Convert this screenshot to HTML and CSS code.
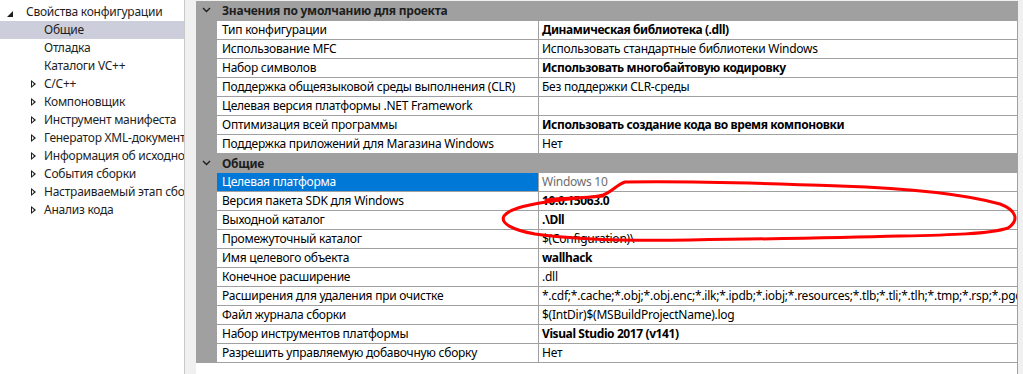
FILE: index.html
```html
<!DOCTYPE html>
<html lang="ru">
<head>
  <meta charset="UTF-8">
  <title>Страницы свойств</title>
  <link rel="stylesheet" href="styles.css">
</head>
<body>
  <div class="window">
    <nav class="tree">
      <div class="tree-item root">
        <svg class="exp-open" width="6" height="6" viewBox="0 0 6 6"><polygon points="6,0 6,6 0,6" fill="#1e1e1e"/></svg>
        Свойства конфигурации
      </div>
      <div class="tree-item child selected">Общие</div>
      <div class="tree-item child">Отладка</div>
      <div class="tree-item child">Каталоги VC++</div>
      <div class="tree-item child has-kids">C/C++</div>
      <div class="tree-item child has-kids">Компоновщик</div>
      <div class="tree-item child has-kids">Инструмент манифеста</div>
      <div class="tree-item child has-kids">Генератор XML-документов</div>
      <div class="tree-item child has-kids">Информация об исходном коде</div>
      <div class="tree-item child has-kids">События сборки</div>
      <div class="tree-item child has-kids">Настраиваемый этап сборки</div>
      <div class="tree-item child has-kids">Анализ кода</div>
    </nav>

    <section class="grid">
      <div class="group">
        <span class="chev"><svg width="9" height="6" viewBox="0 0 9 6"><polyline points="1,1 4.5,4.5 8,1" fill="none" stroke="#1e1e1e" stroke-width="1.4"/></svg></span>
        <span class="group-title">Значения по умолчанию для проекта</span>
      </div>
      <div class="row"><span class="name">Тип конфигурации</span><span class="value bold">Динамическая библиотека (.dll)</span></div>
      <div class="row"><span class="name">Использование MFC</span><span class="value">Использовать стандартные библиотеки Windows</span></div>
      <div class="row"><span class="name">Набор символов</span><span class="value bold">Использовать многобайтовую кодировку</span></div>
      <div class="row"><span class="name">Поддержка общеязыковой среды выполнения (CLR)</span><span class="value">Без поддержки CLR-среды</span></div>
      <div class="row"><span class="name">Целевая версия платформы .NET Framework</span><span class="value"></span></div>
      <div class="row"><span class="name">Оптимизация всей программы</span><span class="value bold">Использовать создание кода во время компоновки</span></div>
      <div class="row"><span class="name">Поддержка приложений для Магазина Windows</span><span class="value">Нет</span></div>

      <div class="group">
        <span class="chev"><svg width="9" height="6" viewBox="0 0 9 6"><polyline points="1,1 4.5,4.5 8,1" fill="none" stroke="#1e1e1e" stroke-width="1.4"/></svg></span>
        <span class="group-title">Общие</span>
      </div>
      <div class="row active"><span class="name">Целевая платформа</span><span class="value muted">Windows 10</span></div>
      <div class="row"><span class="name">Версия пакета SDK для Windows</span><span class="value bold">10.0.15063.0</span></div>
      <div class="row"><span class="name">Выходной каталог</span><span class="value bold">.\Dll</span></div>
      <div class="row"><span class="name">Промежуточный каталог</span><span class="value">$(Configuration)\</span></div>
      <div class="row"><span class="name">Имя целевого объекта</span><span class="value bold">wallhack</span></div>
      <div class="row"><span class="name">Конечное расширение</span><span class="value">.dll</span></div>
      <div class="row"><span class="name">Расширения для удаления при очистке</span><span class="value">*.cdf;*.cache;*.obj;*.obj.enc;*.ilk;*.ipdb;*.iobj;*.resources;*.tlb;*.tli;*.tlh;*.tmp;*.rsp;*.pgc;*.pgd;*.meta;*.tlog;*.manifest;*.res;*.pch;*.exp;*.idb;*.rep;*.xdc;*.pdb</span></div>
      <div class="row"><span class="name">Файл журнала сборки</span><span class="value">$(IntDir)$(MSBuildProjectName).log</span></div>
      <div class="row"><span class="name">Набор инструментов платформы</span><span class="value bold">Visual Studio 2017 (v141)</span></div>
      <div class="row"><span class="name">Разрешить управляемую добавочную сборку</span><span class="value">Нет</span></div>
    </section>
  </div>

  <svg class="scribble" width="1023" height="374" viewBox="0 0 1023 374">
    <path d="M546,200 C565,197 590,199 603,195 C612,192 616,185 625,182 C680,181 760,183 840,186 C900,188 960,193 1000,204 C1016,210 1020,220 1008,228 C990,234 950,235 900,236 C830,238 760,239 690,240 C630,241 570,239 535,234 C512,230 500,223 504,216 C510,208 530,204 560,200 C575,198 590,197 603,196"
      fill="none" stroke="#ff0000" stroke-width="3" stroke-linecap="round" stroke-linejoin="round"/>
  </svg>
</body>
</html>
```

FILE: styles.css
```css
* {
  margin: 0;
  padding: 0;
  box-sizing: border-box;
}

:root {
  --line: #a0a0a0;
  --panel: #f0f0f0;
  --select-tree: #cccedb;
  --select-row: #0078d7;
}

body {
  width: 1023px;
  height: 374px;
  overflow: hidden;
  position: relative;
  background-color: var(--panel);
  font-family: "Noto Sans", "Liberation Sans", sans-serif;
  font-size: 12px;
  letter-spacing: -0.25px;
  color: #000;
}

.window {
  display: flex;
  height: 100%;
}

/* left tree */
.tree {
  width: 185px;
  height: 100%;
  background-color: #fff;
  border-right: 1px solid #c8c8c8;
  padding-top: 3px;
  overflow: hidden;
  flex-shrink: 0;
}

.tree-item {
  height: 18px;
  line-height: 18px;
  white-space: nowrap;
  position: relative;
  color: #1e1e1e;
}

.tree-item.root {
  padding-left: 26px;
}

.exp-open {
  position: absolute;
  left: 7px;
  top: 8px;
}

.tree-item.child {
  padding-left: 44px;
}

.tree-item.has-kids::before {
  content: "";
  position: absolute;
  left: 31px;
  top: 5px;
  width: 0;
  height: 0;
  border-top: 4px solid transparent;
  border-bottom: 4px solid transparent;
  border-left: 5px solid #1e1e1e;
}

.tree-item.has-kids::after {
  content: "";
  position: absolute;
  left: 32px;
  top: 7px;
  width: 0;
  height: 0;
  border-top: 2px solid transparent;
  border-bottom: 2px solid transparent;
  border-left: 2px solid #fff;
}

.tree-item.selected {
  background-color: var(--select-tree);
}

/* property grid */
.grid {
  margin-left: 11px;
  margin-top: 1px;
  width: 822px;
  height: 373px;
  padding-top: 1px;
  background-color: #fff;
  border-right: 1px solid var(--line);
  overflow: hidden;
  flex-shrink: 0;
}

.group {
  height: 19px;
  display: flex;
  align-items: center;
  background-color: var(--line);
  border-bottom: 1px solid var(--line);
}

.grid .group:first-child {
  margin-top: -1px;
  height: 20px;
}

.chev {
  width: 26px;
  display: flex;
  justify-content: center;
  padding-right: 6px;
  padding-bottom: 1px;
}

.group-title {
  font-weight: 700;
  color: #1e1e1e;
}

.row {
  display: grid;
  grid-template-columns: 322px 1fr;
  height: 19px;
  line-height: 18px;
  border-bottom: 1px solid var(--line);
  border-left: 21px solid var(--line);
  white-space: nowrap;
}

.row .name {
  padding-left: 5px;
  border-right: 1px solid var(--line);
  overflow: hidden;
}

.row .value {
  padding-left: 3px;
  overflow: hidden;
}

.row.active .name {
  background-color: var(--select-row);
  color: #fff;
}

.bold {
  font-weight: 700;
  letter-spacing: -0.4px;
}

.muted {
  color: #6d6d6d;
}

.scribble {
  position: absolute;
  left: 0;
  top: 0;
  pointer-events: none;
}
```
